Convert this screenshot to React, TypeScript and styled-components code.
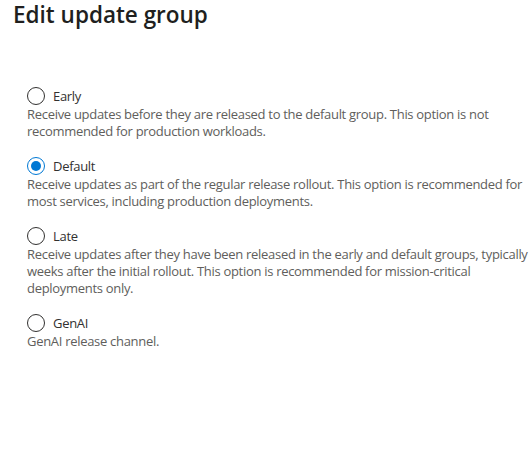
import React, { useState } from 'react';
import styled, { createGlobalStyle } from 'styled-components';

type Option = {
  key: string;
  label: string;
  description: string;
};

const options: Option[] = [
  {
    key: 'early',
    label: 'Early',
    description:
      'Receive updates before they are released to the default group. This option is not recommended for production workloads.',
  },
  {
    key: 'default',
    label: 'Default',
    description:
      'Receive updates as part of the regular release rollout. This option is recommended for most services, including production deployments.',
  },
  {
    key: 'late',
    label: 'Late',
    description:
      'Receive updates after they have been released in the early and default groups, typically weeks after the initial rollout. This option is recommended for mission-critical deployments only.',
  },
  {
    key: 'genai',
    label: 'GenAI',
    description: 'GenAI release channel.',
  },
];

const GlobalStyle = createGlobalStyle`
  body {
    margin: 0;
    background: #ffffff;
    font-family: "Segoe UI", "Open Sans", "Noto Sans", sans-serif;
    -webkit-font-smoothing: antialiased;
  }
`;

const App = () => {
  const [selected, setSelected] = useState<string>('default');

  return (
    <>
      <GlobalStyle />
      <Panel>
        <Title>Edit update group</Title>
        <OptionList role="radiogroup">
          {options.map(o => (
            <OptionItem key={o.key}>
              <RadioRow onClick={() => setSelected(o.key)}>
                <RadioCircle checked={selected === o.key} />
                <RadioLabel>{o.label}</RadioLabel>
              </RadioRow>
              <Description>{o.description}</Description>
            </OptionItem>
          ))}
        </OptionList>
      </Panel>
    </>
  );
};

const Panel = styled.div`
  width: 532px;
  height: 450px;
  box-sizing: border-box;
  background: #ffffff;
`;

const Title = styled.h2`
  margin: 0;
  padding-left: 13px;
  font-size: 22.5px;
  line-height: 30px;
  font-weight: 600;
  color: #201f1e;
`;

const OptionList = styled.div`
  display: flex;
  flex-direction: column;
  gap: 16px;
  padding: 56px 0 0 27px;
`;

const OptionItem = styled.div`
  display: flex;
  flex-direction: column;
`;

const RadioRow = styled.label`
  display: flex;
  align-items: center;
  gap: 8px;
  height: 20px;
  cursor: pointer;
`;

const RadioCircle = styled.span<{ checked: boolean }>`
  width: 18px;
  height: 18px;
  box-sizing: border-box;
  border-radius: 50%;
  border: 1px solid ${props => (props.checked ? '#0078d4' : '#323130')};
  display: flex;
  align-items: center;
  justify-content: center;
  flex-shrink: 0;

  &::after {
    content: '';
    display: ${props => (props.checked ? 'block' : 'none')};
    width: 10px;
    height: 10px;
    border-radius: 50%;
    background: #0078d4;
  }
`;

const RadioLabel = styled.span`
  font-size: 13px;
  letter-spacing: -0.3px;
  color: #323130;
`;

const Description = styled.div`
  font-size: 13px;
  letter-spacing: -0.3px;
  line-height: 17px;
  color: #605e5c;
`;

export default App;
